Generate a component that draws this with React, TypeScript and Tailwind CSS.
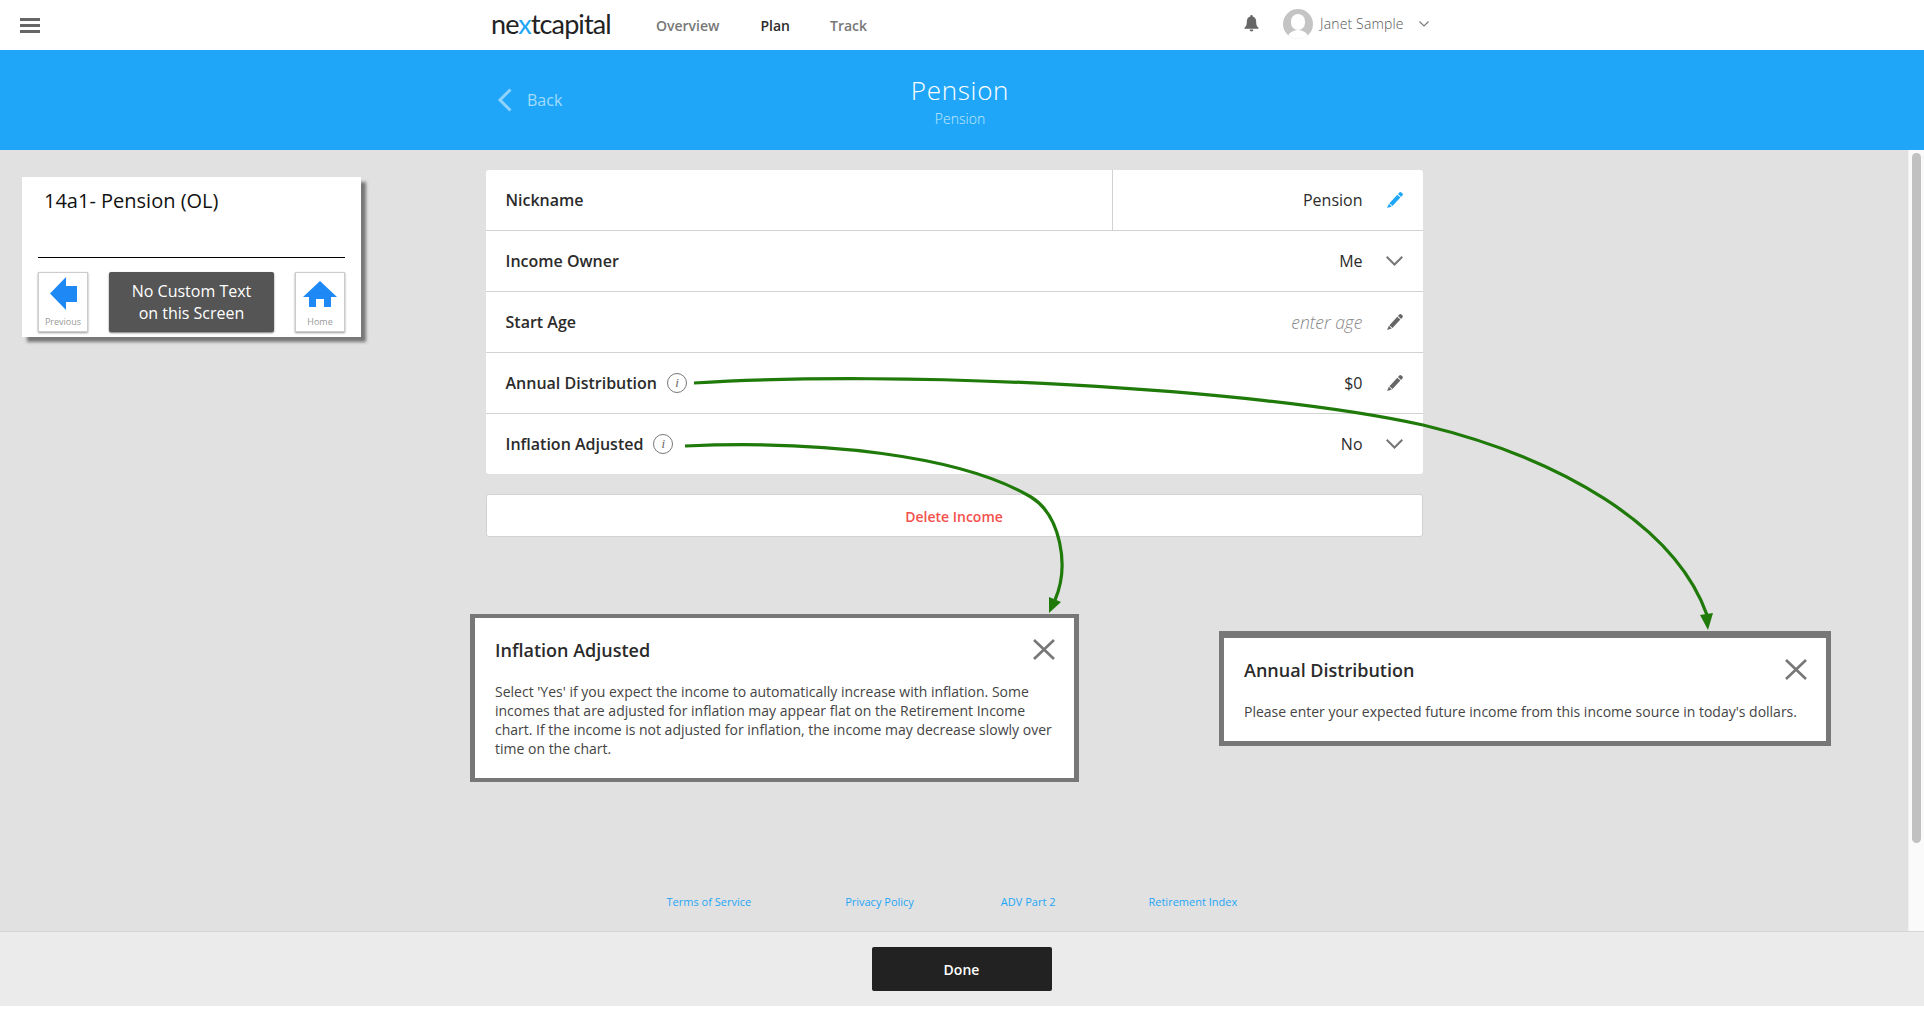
const font = "font-['Open_Sans',sans-serif]";

const Pencil = ({ className }: { className: string }) => (
  <svg viewBox="0 0 16 16" className={className} fill="currentColor">
    <path d="M12.300.6a1.500 1.500 0 0 1 2.100-.1l.9.800a1.500 1.500 0 0 1 .1 2.100l-1.300 1.500-3.100-2.800z" />
    <path d="M10.300 2.800l3.100 2.800-7.900 8.400-3.100-2.800z" />
    <path d="M1.900 11.800l2.900 2.700L0 16z" />
  </svg>
);

const CaretIcon = () => (
  <svg viewBox="0 0 17 10" className="ml-[23px] h-[10px] w-[17px] text-[#777]" fill="none" stroke="currentColor" strokeWidth="2">
    <path d="M.7.7l7.800 7.800L16.300.7" />
  </svg>
);

const CloseIcon = () => (
  <svg viewBox="0 0 22 21" className="h-[21px] w-[22px] text-[#777]" fill="none" stroke="currentColor" strokeWidth="2.600">
    <path d="M1 1l20 19M21 1L1 20" />
  </svg>
);

const Info = () => (
  <span className="flex h-[20px] w-[20px] items-center justify-center rounded-full border border-[#777] font-['Liberation_Serif',serif] text-[13px] italic text-[#666]">
    i
  </span>
);

const Row = ({ label, info, children }: { label: string; info?: boolean; children: React.ReactNode }) => (
  <div className="flex h-[61px] items-center border-b border-[#d2d2d2] px-[20px] last:h-[60px] last:border-b-0">
    <span className="text-[16px] font-semibold text-[#2b2b2b]">{label}</span>
    {info && (
      <span className="ml-[10px]">
        <Info />
      </span>
    )}
    <div className="ml-auto flex items-center">{children}</div>
  </div>
);

const Edit = ({ blue }: { blue?: boolean }) => (
  <Pencil className={`ml-[24px] h-[16px] w-[16px] ${blue ? "text-[#1ea6f7]" : "text-[#666]"}`} />
);

const Modal = ({
  title,
  children,
  className,
}: {
  title: string;
  children: React.ReactNode;
  className: string;
}) => (
  <div className={`absolute border-[#777] bg-white ${className}`}>
    <div className="flex items-start justify-between pr-[19px] pt-[19px]">
      <h3 className="pl-[20px] text-[18px] font-semibold leading-[26px] text-[#2b2b2b]">{title}</h3>
      <div className="pt-[2px]">
        <CloseIcon />
      </div>
    </div>
    <div className="px-[20px] pt-[19px] text-[14px] leading-[19px] text-[#444]">{children}</div>
  </div>
);

export default function App() {
  return (
    <div className={`${font} relative h-[1010px] w-full overflow-hidden bg-white`}>
      <header className="relative flex h-[50px] items-center bg-white">
        <div className="absolute left-[20px] top-[18px] flex w-[20px] flex-col gap-[3px]">
          <span className="h-[3px] bg-[#666]" />
          <span className="h-[3px] bg-[#666]" />
          <span className="h-[3px] bg-[#666]" />
        </div>
        <div className="-mt-[2px] ml-[491px] w-[165px] font-['Lato',sans-serif] text-[27px] tracking-[-0.9px] text-[#222]">
          ne<span className="text-[#1ea6f7]">x</span>tcapital
        </div>
        <nav className="flex items-center text-[14px] font-semibold text-[#777]">
          <span>Overview</span>
          <span className="ml-[41px] text-[#2b2b2b]">Plan</span>
          <span className="ml-[40px]">Track</span>
        </nav>
        <div className="-mt-[3px] ml-[377px] flex items-center">
          <svg viewBox="0 0 16 18" className="h-[17px] w-[15px] text-[#666]" fill="currentColor">
            <path d="M8 0a1.300 1.300 0 0 1 1.300 1.500C12 2.200 13 4.400 13 7c0 4 1 5 2.500 6.500V14.500H.5v-1C2 12 3 11 3 7c0-2.600 1-4.800 3.700-5.500A1.300 1.300 0 0 1 8 0z" />
            <path d="M6 15.500h4a2 2 0 0 1-4 0z" />
          </svg>
          <div className="relative ml-[24px] h-[30px] w-[30px] overflow-hidden rounded-full bg-[#c4c4c4]">
            <span className="absolute left-[8px] top-[5px] h-[16px] w-[14px] rounded-full bg-white" />
            <span className="absolute left-[3px] top-[21px] h-[14px] w-[24px] rounded-t-full bg-white" />
          </div>
          <span className="ml-[7px] text-[14px] font-light tracking-[0.15px] text-[#555]">Janet Sample</span>
          <svg viewBox="0 0 10 6" className="ml-[15px] h-[6px] w-[10px] text-[#777]" fill="none" stroke="currentColor" strokeWidth="1.100">
            <path d="M.5.5L5 5 9.500.5" />
          </svg>
        </div>
      </header>

      <section className="relative flex h-[100px] flex-col items-center bg-[#1fa6f8] pr-[4px] pt-[22px] text-white">
        <div className="absolute left-[497px] top-[38px] flex items-center text-[#a5dcfc]">
          <svg viewBox="0 0 15 24" className="h-[24px] w-[15px] text-[#8fd3fb]" fill="none" stroke="currentColor" strokeWidth="3">
            <path d="M13.500 1.500L3 12l10.500 10.500" />
          </svg>
          <span className="ml-[15px] text-[16px]">Back</span>
        </div>
        <h1 className="text-[26px] font-light leading-[36px] tracking-[0.7px]">Pension</h1>
        <p className="pt-[1px] text-[14px] font-light leading-[20px] text-[#c4e8fd]">Pension</p>
      </section>

      <div className="flex h-[781px]">
        <main className="flex flex-1 flex-col items-center bg-[#e1e1e1] pt-[20px]">
          <div className="w-[937px] rounded-[3px] bg-white">
            <div className="flex h-[61px] items-center border-b border-[#d2d2d2] pl-[20px]">
              <span className="flex-1 text-[16px] font-semibold text-[#2b2b2b]">Nickname</span>
              <div className="flex h-full w-[311px] items-center justify-end border-l border-[#d2d2d2] pr-[20px]">
                <span className="text-[16px] text-[#2b2b2b]">Pension</span>
                <Edit blue />
              </div>
            </div>
            <Row label="Income Owner">
              <span className="text-[16px] text-[#2b2b2b]">Me</span>
              <CaretIcon />
            </Row>
            <Row label="Start Age">
              <span className="text-[17.500px] font-light italic text-[#888]">enter age</span>
              <Edit />
            </Row>
            <Row label="Annual Distribution" info>
              <span className="text-[16px] text-[#2b2b2b]">$0</span>
              <Edit />
            </Row>
            <Row label="Inflation Adjusted" info>
              <span className="text-[16px] text-[#2b2b2b]">No</span>
              <CaretIcon />
            </Row>
          </div>

          <button className="mt-[20px] h-[43px] w-[937px] rounded-[3px] border border-[#d2d2d2] bg-white pt-[1px] text-[14px] font-semibold text-[#f4504c]">
            Delete Income
          </button>

          <div className="mt-auto flex h-[37px] w-[937px] text-[11px] text-[#1ea6f7]">
            <span className="ml-[181px]">Terms of Service</span>
            <span className="ml-[94px]">Privacy Policy</span>
            <span className="ml-[87px]">ADV Part 2</span>
            <span className="ml-[93px]">Retirement Index</span>
          </div>
        </main>
        <div className="flex w-[16px] justify-center border-l border-[#efefef] bg-[#fafafa] pt-[3px]">
          <div className="h-[690px] w-[9px] rounded-full bg-[#c1c1c1]" />
        </div>
      </div>

      <footer className="flex h-[75px] items-start justify-center border-t border-[#d5d5d5] bg-[#ebebeb] pr-[1px] pt-[15px]">
        <button className="h-[44px] w-[180px] rounded-[2px] bg-[#222] text-[14px] font-semibold text-white">Done</button>
      </footer>

      {/* annotations on top of the screen */}
      <div className="absolute left-[22px] top-[177px] h-[160px] w-[339px] bg-white shadow-[5px_5px_3px_#777]">
        <p className="pl-[22px] pt-[10px] text-[20px] leading-[28px] text-[#111]">14a1- Pension (OL)</p>
        <div className="mx-[16px] mt-[42px] h-[1px] bg-black" />
        <div className="mx-[16px] mt-[14px] flex items-start justify-between">
          <div className="flex h-[60px] w-[50px] flex-col items-center border border-[#ccc] bg-white shadow-[0_1px_2px_#999]">
            <svg viewBox="0 0 27 33" className="mt-[4px] h-[33px] w-[27px] text-[#1e88f5]" fill="currentColor">
              <path d="M0 16.500 16 0v9h11v16H16v8z" />
            </svg>
            <span className="mt-[6px] text-[9px] leading-[12px] text-[#999]">Previous</span>
          </div>
          <div className="flex h-[60px] w-[165px] flex-col items-center justify-center rounded-[2px] bg-[#555] text-[16px] leading-[22px] text-white shadow-[0_1px_2px_#777]">
            <span>No Custom Text</span>
            <span>on this Screen</span>
          </div>
          <div className="flex h-[60px] w-[50px] flex-col items-center border border-[#ccc] bg-white shadow-[0_1px_2px_#999]">
            <svg viewBox="0 0 34 26" className="mt-[8px] h-[26px] w-[34px] text-[#1e88f5]" fill="currentColor">
              <path d="M17 0l17 16h-6v10h-7v-8h-8v8H6V16H0z" />
            </svg>
            <span className="mt-[9px] text-[9px] leading-[12px] text-[#999]">Home</span>
          </div>
        </div>
      </div>

      <svg className="pointer-events-none absolute left-0 top-0 h-[1010px] w-[1924px]" viewBox="0 0 1924 1010" fill="none">
        <path d="M694 383C900 370 1250 387 1423 425C1560 458 1675 525 1707 615" stroke="#1f7a0a" strokeWidth="3.200" />
        <path d="M1700 615l13-2-5 17z" fill="#1f7a0a" />
        <path d="M685 446C820 440 960 455 1031 497C1060 515 1070 565 1055 600" stroke="#1f7a0a" strokeWidth="3.200" />
        <path d="M1049 613v-16l12 5z" fill="#1f7a0a" />
      </svg>

      <Modal
        title="Inflation Adjusted"
        className="left-[470px] top-[614px] h-[168px] w-[609px] border-x-[5px] border-y-[4px]"
      >
        Select 'Yes' if you expect the income to automatically increase with inflation. Some incomes that are
        adjusted for inflation may appear flat on the Retirement Income chart. If the income is not adjusted for
        inflation, the income may decrease slowly over time on the chart.
      </Modal>
      <Modal
        title="Annual Distribution"
        className="left-[1219px] top-[631px] h-[115px] w-[612px] border-x-[5px] border-b-[5px] border-t-[7px]"
      >
        Please enter your expected future income from this income source in today's dollars.
      </Modal>
    </div>
  );
}
